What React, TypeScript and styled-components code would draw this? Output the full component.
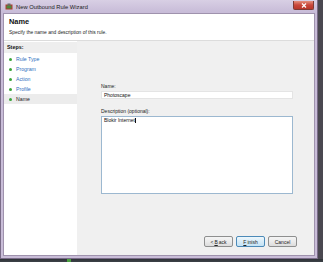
import styled, { createGlobalStyle } from "styled-components";

const Global = createGlobalStyle`
  html, body { margin: 0; padding: 0; }
  body {
    width: 323px;
    height: 262px;
    overflow: hidden;
    background: #4a4850;
    font-family: "Liberation Sans", Arial, sans-serif;
  }
`;

const steps = [
  { label: "Rule Type", done: true },
  { label: "Program", done: true },
  { label: "Action", done: true },
  { label: "Profile", done: true },
  { label: "Name", current: true },
];

export default function App() {
  return (
    <>
      <Global />
      <Desktop>
        <Window>
          <TitleBar>
            <AppIcon viewBox="0 0 8 8">
              <rect x="0.5" y="1.5" width="7" height="5" fill="#b03a2e" />
              <rect x="1.5" y="2.5" width="5" height="3" fill="#4a8a3c" />
              <rect x="2.5" y="0.5" width="3" height="2" fill="#6a6a6a" />
            </AppIcon>
            <Title>New Outbound Rule Wizard</Title>
            <CloseBtn>
              <svg width="6" height="5" viewBox="0 0 6 5">
                <path d="M1 0.5 L5 4.5 M5 0.5 L1 4.5" stroke="#fff" strokeWidth="1.2" />
              </svg>
            </CloseBtn>
          </TitleBar>
          <Client>
            <Header>
              <Heading>Name</Heading>
              <SubHeading>Specify the name and description of this rule.</SubHeading>
            </Header>
            <Body>
              <Sidebar>
                <StepsTitle>Steps:</StepsTitle>
                {steps.map((s) => (
                  <Step key={s.label} current={!!s.current}>
                    <Dot />
                    {s.label}
                  </Step>
                ))}
              </Sidebar>
              <Main>
                <Form>
                  <Label>Name:</Label>
                  <Input>Photoscape</Input>
                  <Label>Description (optional):</Label>
                  <TextArea>
                    Blokir Internet<Caret />
                  </TextArea>
                </Form>
                <Buttons>
                  <Button>
                    &lt; <u>B</u>ack
                  </Button>
                  <Button primary>
                    <u>F</u>inish
                  </Button>
                  <Button>Cancel</Button>
                </Buttons>
              </Main>
            </Body>
          </Client>
        </Window>
        <Taskbar>
          <TaskIcon />
        </Taskbar>
      </Desktop>
    </>
  );
}

const Desktop = styled.div`
  width: 323px;
  height: 262px;
  display: flex;
  flex-direction: column;
`;

const Window = styled.div`
  width: 318px;
  height: 259px;
  box-sizing: border-box;
  background: linear-gradient(180deg, #d8cfe4 0%, #c8bcd8 12px, #c9bdd8 100%);
  border: 1px solid #7a6c88;
  border-top: none;
  padding: 0 2px 2px 2px;
  display: flex;
  flex-direction: column;
`;

const TitleBar = styled.div`
  height: 13px;
  display: flex;
  align-items: center;
  padding-left: 2px;
  gap: 3px;
`;

const AppIcon = styled.svg`
  width: 8px;
  height: 8px;
`;

const Title = styled.div`
  font-size: 5.8px;
  color: #222;
  flex: 1;
`;

const CloseBtn = styled.div`
  width: 19px;
  height: 8px;
  margin-right: 1px;
  margin-bottom: 2px;
  border-radius: 0 0 2px 2px;
  background: linear-gradient(180deg, #e4907e 0%, #c9463a 50%, #b8362a 100%);
  border: 1px solid #7e3a34;
  border-top: none;
  display: flex;
  align-items: center;
  justify-content: center;
`;

const Client = styled.div`
  flex: 1;
  display: flex;
  flex-direction: column;
  background: #fff;
  border: 1px solid #9f92ad;
  min-height: 0;
`;

const Header = styled.div`
  height: 27px;
  padding: 3px 5px 0;
  box-sizing: border-box;
  border-bottom: 1px solid #dcdcdc;
`;

const Heading = styled.div`
  font-size: 7.4px;
  font-weight: bold;
  color: #111;
  line-height: 9px;
`;

const SubHeading = styled.div`
  font-size: 4.9px;
  color: #222;
  margin-top: 4px;
`;

const Body = styled.div`
  flex: 1;
  display: flex;
  min-height: 0;
`;

const Sidebar = styled.div`
  width: 73px;
  background: #fff;
  display: flex;
  flex-direction: column;
  padding-top: 1px;
`;

const StepsTitle = styled.div`
  height: 11px;
  line-height: 11px;
  padding-left: 3px;
  background: #eeeeee;
  font-size: 5.4px;
  font-weight: bold;
  color: #111;
  margin-bottom: 1px;
`;

const Step = styled.div<{ current: boolean }>`
  height: 10px;
  display: flex;
  align-items: center;
  gap: 4px;
  padding-left: 5px;
  font-size: 5.2px;
  color: ${({ current }) => (current ? "#222" : "#2f6fc0")};
  background: ${({ current }) => (current ? "#ececec" : "transparent")};
`;

const Dot = styled.span`
  width: 3px;
  height: 3px;
  border-radius: 50%;
  background: #3aa43a;
`;

const Main = styled.div`
  flex: 1;
  background: #f0f0f0;
  display: flex;
  flex-direction: column;
  padding: 42px 17px 8px 24px;
`;

const Form = styled.div`
  width: 192px;
  display: flex;
  flex-direction: column;
  flex: 1;
`;

const Label = styled.div`
  font-size: 5px;
  color: #222;
  line-height: 7px;
`;

const Input = styled.div`
  height: 8px;
  box-sizing: border-box;
  background: #fff;
  border: 1px solid #e4e4e4;
  font-size: 5px;
  line-height: 6px;
  padding-left: 2px;
  color: #111;
  margin: 1px 0 9px;
`;

const TextArea = styled.div`
  height: 78px;
  box-sizing: border-box;
  background: #fff;
  border: 1px solid #9cb8d0;
  font-size: 5px;
  line-height: 6px;
  padding-left: 2px;
  color: #111;
  margin-top: 1px;
`;

const Caret = styled.span`
  display: inline-block;
  width: 1px;
  height: 5px;
  background: #111;
  vertical-align: -1px;
`;

const Buttons = styled.div`
  display: flex;
  justify-content: flex-end;
  gap: 3px;
`;

const Button = styled.div<{ primary?: boolean }>`
  width: 29px;
  height: 11px;
  box-sizing: border-box;
  border: 1px solid ${({ primary }) => (primary ? "#4c8ab8" : "#8e8f8f")};
  border-radius: 2px;
  background: ${({ primary }) =>
    primary
      ? "linear-gradient(180deg, #eef7fc 0%, #d8ecf8 50%, #c4e2f4 100%)"
      : "linear-gradient(180deg, #f4f4f4 0%, #ebebeb 50%, #dcdcdc 100%)"};
  font-size: 5px;
  color: #222;
  display: flex;
  align-items: center;
  justify-content: center;
  gap: 1px;
`;

const Taskbar = styled.div`
  flex: 1;
  background: linear-gradient(180deg, #2e3236 0%, #3c4248 100%);
  display: flex;
  align-items: flex-start;
  padding-left: 67px;
`;

const TaskIcon = styled.div`
  width: 4px;
  height: 3px;
  background: #4aa040;
`;
